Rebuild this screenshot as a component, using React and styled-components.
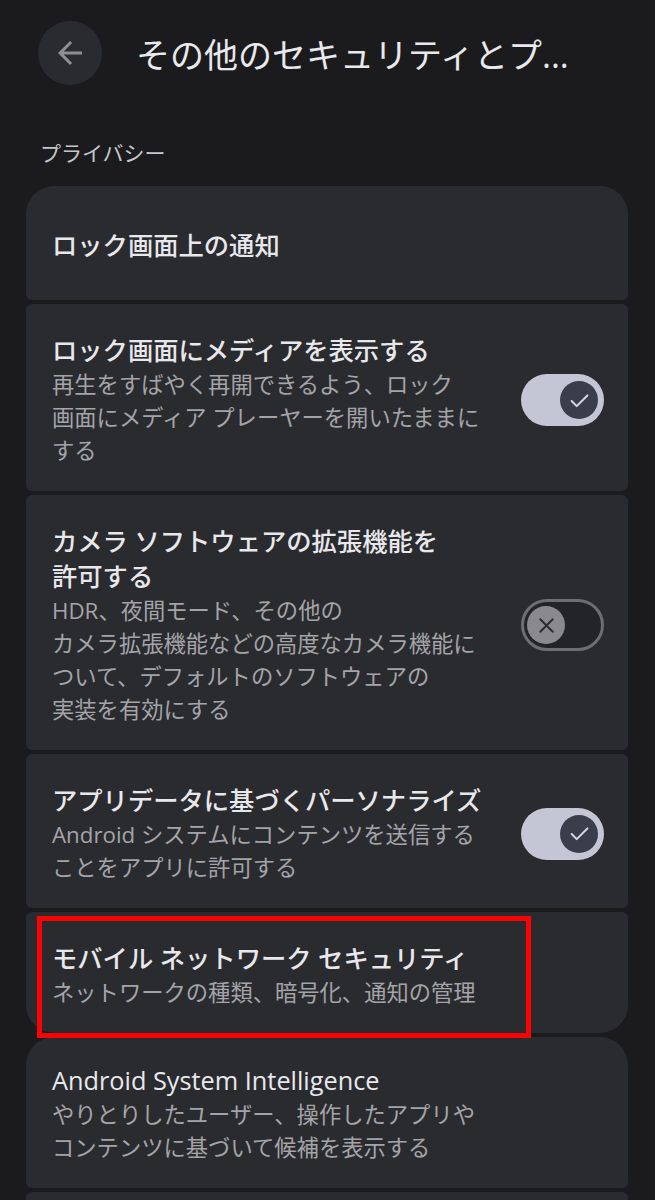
import React from 'react';
import styled, { createGlobalStyle } from 'styled-components';

const GlobalStyle = createGlobalStyle`
  html, body {
    margin: 0;
    padding: 0;
    background: #1b1b1e;
  }
  body {
    font-family: "Open Sans", "Noto Sans CJK JP", sans-serif;
    -webkit-font-smoothing: antialiased;
  }
`;

const Page = styled.div`
  width: 655px;
  height: 1200px;
  overflow: hidden;
  box-sizing: border-box;
  padding: 21px 27px 0 26px;
  background: #1b1b1e;
`;

const Header = styled.header`
  display: flex;
  align-items: center;
  height: 64px;
  padding-left: 12px;
`;

const BackButton = styled.button`
  width: 64px;
  height: 64px;
  border-radius: 50%;
  border: none;
  padding: 0;
  background: #2a2b2f;
  display: flex;
  align-items: center;
  justify-content: center;
  flex-shrink: 0;
`;

const Title = styled.h1`
  margin: 0 0 0 34px;
  font-size: 34px;
  font-weight: 400;
  color: #e9e9ed;
  white-space: nowrap;
`;

const SectionLabel = styled.div`
  margin: 55px 0 20px 14px;
  font-size: 21px;
  line-height: 26px;
  color: #c6c6ca;
`;

const Group = styled.div`
  display: flex;
  flex-direction: column;
  gap: 4px;
  margin-bottom: 4px;
`;

const Card = styled.div`
  position: relative;
  display: flex;
  align-items: center;
  box-sizing: border-box;
  min-height: ${({ $minHeight }) => $minHeight || 0}px;
  padding: ${({ $top }) => $top || 29}px 24px 24px 26px;
  background: #2a2b2f;
  border-radius: 6px;

  &:first-child {
    border-top-left-radius: 28px;
    border-top-right-radius: 28px;
  }
  &:last-child {
    border-bottom-left-radius: 28px;
    border-bottom-right-radius: 28px;
  }
`;

const TextBlock = styled.div`
  flex: 1;
  min-width: 0;
`;

const ItemTitle = styled.div`
  font-size: 25.3px;
  line-height: 35px;
  font-weight: 500;
  color: #e8e8ec;
`;

const ItemSub = styled.div`
  font-size: 22.3px;
  line-height: 33px;
  color: #a4a4a8;
`;

const Track = styled.div`
  position: relative;
  box-sizing: border-box;
  width: 83px;
  height: 52px;
  border-radius: 26px;
  flex-shrink: 0;
  margin-left: 16px;
  background: ${({ $on }) => ($on ? '#c5c6d5' : '#232427')};
  border: ${({ $on }) => ($on ? 'none' : '3px solid #6e6e72')};
`;

const Thumb = styled.div`
  position: absolute;
  top: 50%;
  transform: translateY(-50%);
  width: 38px;
  height: 38px;
  border-radius: 50%;
  display: flex;
  align-items: center;
  justify-content: center;
  background: ${({ $on }) => ($on ? '#3b3d4b' : '#8a8a8e')};
  ${({ $on }) => ($on ? 'right: 6px;' : 'left: 3px;')}
`;

const Highlight = styled.div`
  position: absolute;
  left: 11px;
  top: 4px;
  width: 494px;
  height: 122px;
  box-sizing: border-box;
  border: 5px solid #ff0000;
  z-index: 2;
  pointer-events: none;
`;

const ArrowBack = () => (
  <svg width="36" height="36" viewBox="0 0 24 24" fill="#8f8f93">
    <path d="M20 11H7.83l5.59-5.59L12 4l-8 8 8 8 1.41-1.41L7.83 13H20v-2z" />
  </svg>
);

const Toggle = ({ on }) => (
  <Track $on={on}>
    <Thumb $on={on}>
      {on ? (
        <svg width="27" height="27" viewBox="0 0 24 24" fill="none" stroke="#d4d5e2" strokeWidth="1.8" strokeLinecap="round" strokeLinejoin="round">
          <path d="M5 12.5l4.5 4.5L19 7.5" />
        </svg>
      ) : (
        <svg width="25" height="25" viewBox="0 0 24 24" fill="none" stroke="#2a2b2f" strokeWidth="1.8" strokeLinecap="round">
          <path d="M6 6l12 12M18 6L6 18" />
        </svg>
      )}
    </Thumb>
  </Track>
);

const Lines = ({ lines }) => lines.map((l, i) => (
  <React.Fragment key={i}>
    {l}
    {i < lines.length - 1 && <br />}
  </React.Fragment>
));

export default function App() {
  return (
    <Page lang="ja">
      <GlobalStyle />
      <Header>
        <BackButton aria-label="戻る"><ArrowBack /></BackButton>
        <Title>その他のセキュリティとプ...</Title>
      </Header>
      <SectionLabel>プライバシー</SectionLabel>

      <Group>
        <Card $minHeight={114}>
          <TextBlock>
            <ItemTitle>ロック画面上の通知</ItemTitle>
          </TextBlock>
        </Card>

        <Card>
          <TextBlock>
            <ItemTitle>ロック画面にメディアを表示する</ItemTitle>
            <ItemSub>
              <Lines lines={['再生をすばやく再開できるよう、ロック', '画面にメディア プレーヤーを開いたままに', 'する']} />
            </ItemSub>
          </TextBlock>
          <Toggle on />
        </Card>

        <Card>
          <TextBlock>
            <ItemTitle>
              <Lines lines={['カメラ ソフトウェアの拡張機能を', '許可する']} />
            </ItemTitle>
            <ItemSub>
              <Lines lines={['HDR、夜間モード、その他の', 'カメラ拡張機能などの高度なカメラ機能に', 'ついて、デフォルトのソフトウェアの', '実装を有効にする']} />
            </ItemSub>
          </TextBlock>
          <Toggle on={false} />
        </Card>

        <Card>
          <TextBlock>
            <ItemTitle>アプリデータに基づくパーソナライズ</ItemTitle>
            <ItemSub>
              <Lines lines={['Android システムにコンテンツを送信する', 'ことをアプリに許可する']} />
            </ItemSub>
          </TextBlock>
          <Toggle on />
        </Card>

        <Card>
          <TextBlock>
            <ItemTitle>モバイル ネットワーク セキュリティ</ItemTitle>
            <ItemSub>ネットワークの種類、暗号化、通知の管理</ItemSub>
          </TextBlock>
          <Highlight />
        </Card>
      </Group>

      <Group>
        <Card $top={26}>
          <TextBlock>
            <ItemTitle>Android System Intelligence</ItemTitle>
            <ItemSub>
              <Lines lines={['やりとりしたユーザー、操作したアプリや', 'コンテンツに基づいて候補を表示する']} />
            </ItemSub>
          </TextBlock>
        </Card>
        <Card $minHeight={114}>
          <TextBlock>
            <ItemTitle>&nbsp;</ItemTitle>
          </TextBlock>
        </Card>
      </Group>
    </Page>
  );
}
